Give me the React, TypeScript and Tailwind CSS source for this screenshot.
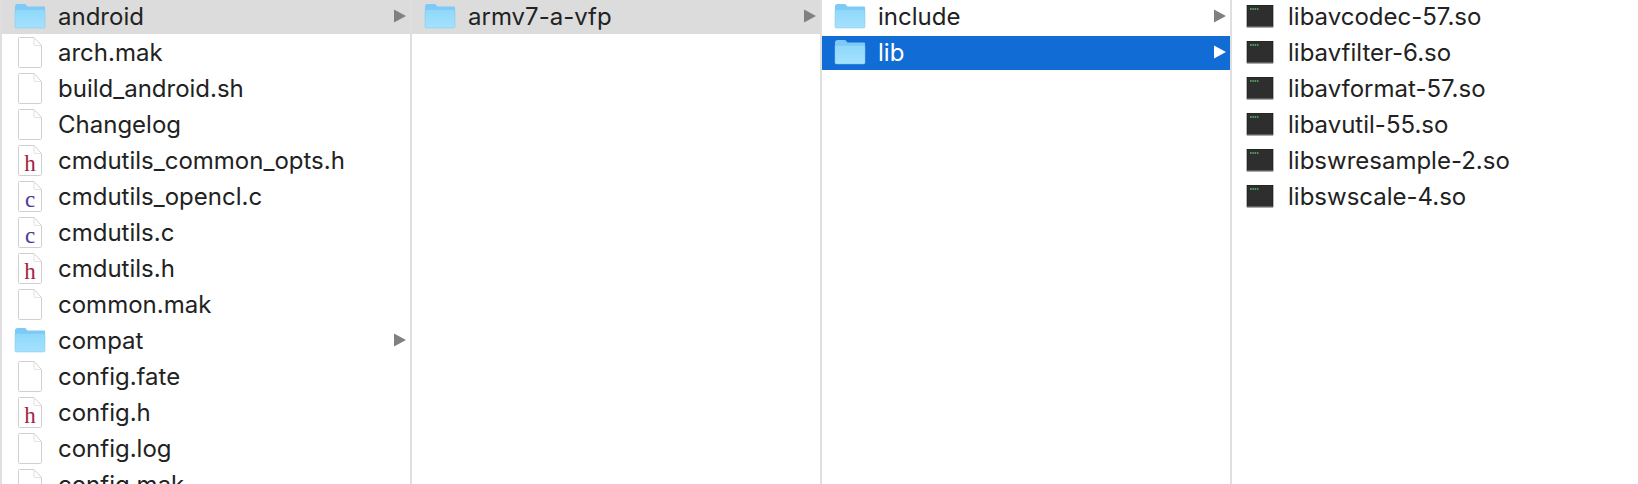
type Kind = 'folder' | 'file' | 'h' | 'c' | 'exec';

interface Entry {
  name: string;
  kind: Kind;
  state?: 'open' | 'selected';
}

const columns: Entry[][] = [
  [
    { name: 'android', kind: 'folder', state: 'open' },
    { name: 'arch.mak', kind: 'file' },
    { name: 'build_android.sh', kind: 'file' },
    { name: 'Changelog', kind: 'file' },
    { name: 'cmdutils_common_opts.h', kind: 'h' },
    { name: 'cmdutils_opencl.c', kind: 'c' },
    { name: 'cmdutils.c', kind: 'c' },
    { name: 'cmdutils.h', kind: 'h' },
    { name: 'common.mak', kind: 'file' },
    { name: 'compat', kind: 'folder' },
    { name: 'config.fate', kind: 'file' },
    { name: 'config.h', kind: 'h' },
    { name: 'config.log', kind: 'file' },
    { name: 'config.mak', kind: 'file' },
  ],
  [{ name: 'armv7-a-vfp', kind: 'folder', state: 'open' }],
  [
    { name: 'include', kind: 'folder' },
    { name: 'lib', kind: 'folder', state: 'selected' },
  ],
  [
    { name: 'libavcodec-57.so', kind: 'exec' },
    { name: 'libavfilter-6.so', kind: 'exec' },
    { name: 'libavformat-57.so', kind: 'exec' },
    { name: 'libavutil-55.so', kind: 'exec' },
    { name: 'libswresample-2.so', kind: 'exec' },
    { name: 'libswscale-4.so', kind: 'exec' },
  ],
];

function FolderIcon() {
  return (
    <svg width="32" height="26" viewBox="0 2 32 26" className="shrink-0">
      <defs>
        <linearGradient id="folderBody" x1="0" y1="0" x2="0" y2="1">
          <stop offset="0" stopColor="#8ed8fb" />
          <stop offset="1" stopColor="#a5e1fd" />
        </linearGradient>
      </defs>
      <path d="M1 4.5C1 3 2 2 3.5 2h6.5c1.2 0 1.8.5 2.6 1.4l.9 1.1H30c.6 0 1 .4 1 1V8H1z" fill="#7ccaf5" />
      <path d="M1 7.5h30v17.300c0 .7-.5 1.200-1.200 1.200H2.200C1.500 26 1 25.500 1 24.800z" fill="url(#folderBody)" stroke="#7fc4ea" strokeWidth="0.5" />
    </svg>
  );
}

function DocIcon({ letter }: { letter?: 'h' | 'c' }) {
  return (
    <svg width="26" height="33" viewBox="0 1 26 33" className="shrink-0">
      <path
        d="M1.500 2.500c0-.6.4-1 1-1h14.500l7.500 8v21c0 .6-.4 1-1 1h-21c-.6 0-1-.4-1-1z"
        fill="#fff"
        stroke="#d0d0d0"
        strokeWidth="1"
      />
      <path d="M17 1.500v7c0 .6.400 1 1 1h6.500" fill="none" stroke="#e2e2e2" strokeWidth="1" />
      {letter && (
        <text
          x="13"
          y="26.500"
          textAnchor="middle"
          fontFamily="'Liberation Serif', serif"
          fontSize="23"
          fill={letter === 'h' ? '#a1243f' : '#4c3a9a'}
        >
          {letter}
        </text>
      )}
    </svg>
  );
}

function ExecIcon() {
  return (
    <svg width="28" height="24" viewBox="0 1 28 24" className="shrink-0">
      <rect x="1" y="1" width="26" height="22" fill="#2e2e2e" stroke="#111" strokeWidth="0.6" />
      <rect x="1" y="22.500" width="26" height="1" fill="#9a9a9a" />
      <path d="M4 5h9" stroke="#5fc06a" strokeWidth="1.400" strokeDasharray="1.500 0.800" />
    </svg>
  );
}

function Arrow({ white }: { white: boolean }) {
  return (
    <svg width="12" height="14" viewBox="0 0 12 14" className="mb-[2px] shrink-0">
      <path d="M0 0.500 12 7 0 13.500z" fill={white ? '#ffffff' : '#808080'} />
    </svg>
  );
}

function Row({ entry }: { entry: Entry }) {
  const selected = entry.state === 'selected';
  const rowTone = selected ? 'bg-[#126cd6] text-white' : entry.state === 'open' ? 'bg-[#dcdcdc] text-[#222222]' : 'text-[#222222]';
  return (
    <div className={`mb-[2px] flex h-[34px] items-center pr-[4px] ${rowTone}`}>
      <span className="flex w-[56px] shrink-0 justify-center">
        {entry.kind === 'folder' && <FolderIcon />}
        {entry.kind === 'file' && <DocIcon />}
        {(entry.kind === 'h' || entry.kind === 'c') && <DocIcon letter={entry.kind} />}
        {entry.kind === 'exec' && <ExecIcon />}
      </span>
      <span className="flex-1 truncate text-[24px] leading-[34px]">{entry.name}</span>
      {entry.kind === 'folder' && <Arrow white={selected} />}
    </div>
  );
}

export default function App() {
  return (
    <div className="grid h-[484px] w-[1638px] grid-cols-[408px_408px_408px_406px] gap-x-[2px] overflow-hidden bg-[#dfdfdf] pl-[2px] font-['Inter',sans-serif]">
      {columns.map((col, i) => (
        <div key={i} className="h-full overflow-hidden bg-white">
          {col.map((entry) => (
            <Row key={entry.name} entry={entry} />
          ))}
        </div>
      ))}
    </div>
  );
}
